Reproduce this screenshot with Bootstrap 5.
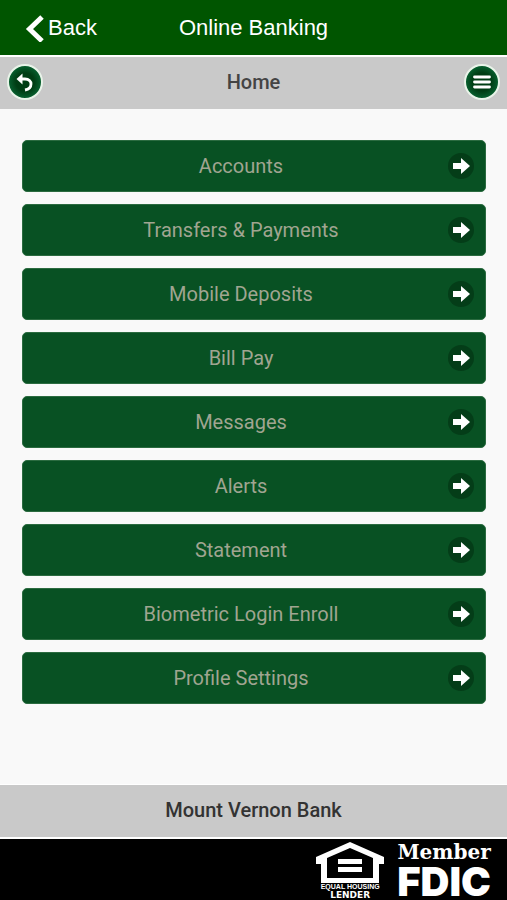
<!DOCTYPE html>
<html lang="en">
<head>
<meta charset="utf-8">
<meta name="viewport" content="width=device-width, initial-scale=1">
<title>Online Banking</title>
<link href="https://cdn.jsdelivr.net/npm/bootstrap@5.3.0/dist/css/bootstrap.min.css" rel="stylesheet">
<style>
body{background:#f9f9f9;font-family:Roboto,"Liberation Sans",sans-serif;font-size:20px;line-height:24px}
.top-bar{background:#005500;color:#fff;height:55px;font-family:"Liberation Sans",Arial,sans-serif;font-size:22px}
.side{flex:1 1 0}
.back-link{color:#fff;padding-left:25px}
.page-bar{background:#c9c9c9;color:#444;border-top:2px solid #fff;height:54px;padding:0 7px 2px}
.page-title{font-size:20px;line-height:24px}
.round-btn{width:36px;height:36px;border:2px solid #e9f4e9;border-radius:50%;background:radial-gradient(circle,#003d14 40%,#07602f 72%)}
.menu{padding:31px 21px 32px 22px;gap:12px}
.menu-btn{height:52px;background:#085123;color:#a0a591;border:1px solid #2b6b40;border-radius:5px;font-size:20px;line-height:24px;padding:0 11px}
.menu-btn:hover,.menu-btn:active{background:#0a6029!important;color:#c3ccb8!important}
.arrow-cell{width:26px}
.bank-name{background:#c9c9c9;color:#333;border-top:1px solid #fff;border-bottom:2px solid #fff;height:55px;padding-bottom:2px}
.legal{background:#000;color:#fff;height:61px;padding:0 16px 0 0;gap:12px}
.lender{width:70px;padding-top:3px}
.lender-small{font:bold 7px/8px "Liberation Sans",sans-serif}
.lender-big{font:bold 9px/9px "DejaVu Sans",sans-serif}
.fdic-top{font:bold 20px/24px "DejaVu Serif",serif}
.fdic-main{font:900 40px/36px Inter,"Liberation Sans",sans-serif}
</style>
</head>
<body>
<div class="d-flex flex-column min-vh-100">
<header>
  <div class="top-bar d-flex align-items-center">
    <div class="side d-flex align-items-center"><a href="#" class="back-link d-flex align-items-center text-decoration-none">
      <svg width="23" height="28" viewBox="0 0 23 28" aria-hidden="true"><path d="M17 3 4.500 15 17 27" fill="none" stroke="#fff" stroke-width="5"/></svg>Back</a></div>
    <span>Online Banking</span>
    <div class="side"></div>
  </div>
  <div class="page-bar d-flex align-items-center justify-content-between">
    <button type="button" class="round-btn btn p-0 d-flex align-items-center justify-content-center" aria-label="Go back">
      <svg width="22" height="22" viewBox="0 0 22 22" fill="none" stroke="#fff" stroke-width="2.800"><path d="M6 8h5c8 0 8 9.500 0 11"/><path d="m8.500 2.500-6 5.500 6 5.500z" fill="#fff" stroke="none"/></svg>
    </button>
    <h1 class="page-title fw-medium m-0">Home</h1>
    <button type="button" class="round-btn btn p-0 d-flex align-items-center justify-content-center" aria-label="Menu">
      <svg width="18" height="14" viewBox="0 0 18 14" stroke="#fff" stroke-width="2.800" stroke-linecap="round"><path d="M1.500 2h15M1.500 7h15M1.500 12h15"/></svg>
    </button>
  </div>
</header>
<svg class="d-none" aria-hidden="true"><symbol id="arrow" viewBox="0 0 26 26"><circle cx="13" cy="13" r="13" fill="#043d18"/><path d="M5 10h8V5l9 8-9 8v-5H5z" fill="#fff"/></symbol></svg>
<main class="flex-grow-1">
  <nav class="menu d-flex flex-column" aria-label="Banking">
    <button type="button" class="menu-btn btn d-flex align-items-center"><span class="flex-grow-1">Accounts</span><svg class="arrow-cell" height="26"><use href="#arrow"/></svg></button>
    <button type="button" class="menu-btn btn d-flex align-items-center"><span class="flex-grow-1">Transfers &amp; Payments</span><svg class="arrow-cell" height="26"><use href="#arrow"/></svg></button>
    <button type="button" class="menu-btn btn d-flex align-items-center"><span class="flex-grow-1">Mobile Deposits</span><svg class="arrow-cell" height="26"><use href="#arrow"/></svg></button>
    <button type="button" class="menu-btn btn d-flex align-items-center"><span class="flex-grow-1">Bill Pay</span><svg class="arrow-cell" height="26"><use href="#arrow"/></svg></button>
    <button type="button" class="menu-btn btn d-flex align-items-center"><span class="flex-grow-1">Messages</span><svg class="arrow-cell" height="26"><use href="#arrow"/></svg></button>
    <button type="button" class="menu-btn btn d-flex align-items-center"><span class="flex-grow-1">Alerts</span><svg class="arrow-cell" height="26"><use href="#arrow"/></svg></button>
    <button type="button" class="menu-btn btn d-flex align-items-center"><span class="flex-grow-1">Statement</span><svg class="arrow-cell" height="26"><use href="#arrow"/></svg></button>
    <button type="button" class="menu-btn btn d-flex align-items-center"><span class="flex-grow-1">Biometric Login Enroll</span><svg class="arrow-cell" height="26"><use href="#arrow"/></svg></button>
    <button type="button" class="menu-btn btn d-flex align-items-center"><span class="flex-grow-1">Profile Settings</span><svg class="arrow-cell" height="26"><use href="#arrow"/></svg></button>
  </nav>
</main>
<footer>
  <div class="bank-name d-flex align-items-center justify-content-center fw-medium">Mount Vernon Bank</div>
  <div class="legal d-flex justify-content-end align-items-center">
    <div class="lender d-flex flex-column align-items-center text-nowrap">
      <svg width="70" height="41" viewBox="0 0 70 41" aria-hidden="true"><path fill="#fff" fill-rule="evenodd" d="M35 0 69 15v7h-5v19H6V22H1v-7zM35 6 12 16v20h46V16z"/><path fill="#fff" d="M23 17h24v5H23zM23 25h24v5H23z"/></svg>
      <span class="lender-small">EQUAL HOUSING</span>
      <span class="lender-big">LENDER</span>
    </div>
    <div class="d-flex flex-column align-items-center">
      <span class="fdic-top">Member</span>
      <span class="fdic-main">FDIC</span>
    </div>
  </div>
</footer>
</div>
<script src="https://cdn.jsdelivr.net/npm/bootstrap@5.3.0/dist/js/bootstrap.bundle.min.js"></script>
</body>
</html>
